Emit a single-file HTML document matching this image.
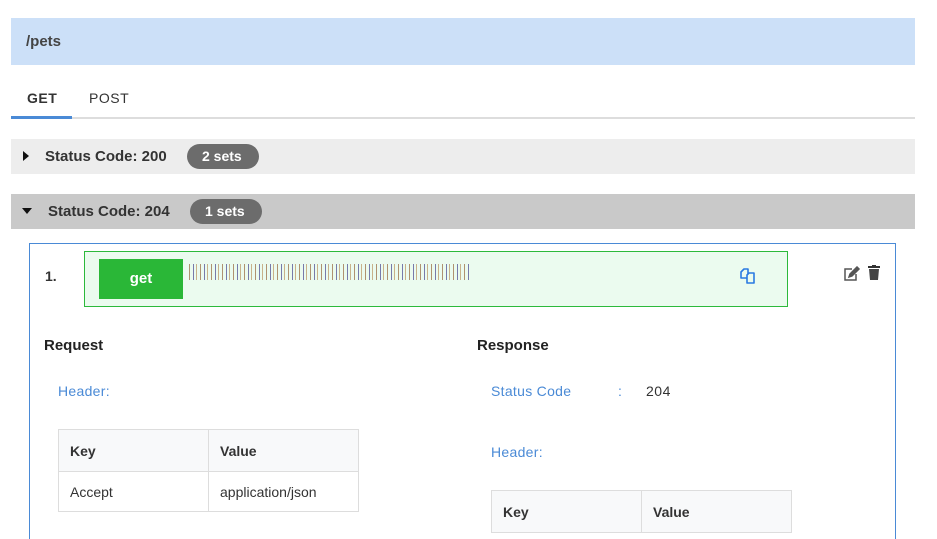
<!DOCTYPE html>
<html><head><style>
html,body{margin:0;width:937px;height:539px;overflow:hidden;background:#fff;font-family:"Liberation Sans",sans-serif}
#w{position:relative;width:937px;height:539px;overflow:hidden}
.a{position:absolute}
.hdr{left:11px;top:18px;width:904px;height:47px;background:#cce0f8;color:#444;font-size:15px;font-weight:bold;line-height:47px;padding-left:15px;box-sizing:border-box}
.tab{top:90px;font-size:14px;color:#333;letter-spacing:.5px}
.bar{left:11px;width:904px;height:35px;font-weight:bold;font-size:15px;color:#333}
.pill{position:absolute;background:#6c6c6c;color:#fff;border-radius:13px;height:25px;line-height:25px;font-size:14px;font-weight:bold;padding:0 15px;top:5px}
.lbl{color:#4a8ad6;font-size:14px;letter-spacing:.3px}
table{border-collapse:collapse;font-size:14px;color:#333}
td{border:1px solid #ddd;height:42px;padding:0 11px;box-sizing:border-box}
</style></head><body><div id="w">
<div class="a hdr">/pets</div>
<div class="a tab" style="left:27px;font-weight:bold">GET</div>
<div class="a tab" style="left:89px">POST</div>
<div class="a" style="left:11px;top:117px;width:904px;height:2px;background:#ddd"></div>
<div class="a" style="left:11px;top:116px;width:61px;height:3px;background:#4a8ad6"></div>
<div class="a bar" style="top:139px;background:#ededed">
 <div class="a" style="left:12px;top:12px;width:0;height:0;border-left:6px solid #111;border-top:5px solid transparent;border-bottom:5px solid transparent"></div>
 <div class="a" style="left:34px;top:9px">Status Code: 200</div>
 <div class="pill" style="left:176px;width:42px">2 sets</div>
</div>
<div class="a bar" style="top:194px;background:#c9c9c9">
 <div class="a" style="left:11px;top:14px;width:0;height:0;border-top:6px solid #111;border-left:5px solid transparent;border-right:5px solid transparent"></div>
 <div class="a" style="left:37px;top:9px">Status Code: 204</div>
 <div class="pill" style="left:179px;width:42px">1 sets</div>
</div>
<div class="a" style="left:29px;top:243px;width:867px;height:296px;border:1px solid #4a8ad6;border-bottom:0;box-sizing:border-box"></div>
<div class="a" style="left:45px;top:268px;font-weight:bold;font-size:14px;color:#333">1.</div>
<div class="a" style="left:84px;top:251px;width:704px;height:56px;background:#ebfbef;border:1px solid #2cb93b;box-sizing:border-box"></div>
<div class="a" style="left:99px;top:259px;width:84px;height:40px;background:#2ab737;color:#fff;font-weight:bold;font-size:15px;text-align:center;line-height:40px">get</div>
<div class="a" style="left:189px;top:264px;width:282px;height:16px;background:repeating-linear-gradient(90deg,#a07850 0 1px,transparent 1px 4px,#5a5a9a 4px 5px,transparent 5px 7px,#c0a070 7px 8px,transparent 8px 11px);opacity:.8"></div>
<svg class="a" style="left:739px;top:266px" width="19" height="19" viewBox="0 0 19 19" fill="#ebfbef" stroke="#2a7ae2" stroke-width="1.6" stroke-linejoin="round"><path d="M2 6l3-3h4v9H2z"/><path d="M8 9l2-2h5v10H8z"/></svg>
<svg class="a" style="left:843px;top:266px" width="18" height="16" viewBox="0 0 18 16" fill="none" stroke="#555" stroke-width="1.5"><path d="M9 3H2v11h11V8"/><path d="M6 11l1-3 7-7 2 2-7 7z" fill="#555"/></svg>
<svg class="a" style="left:868px;top:265px" width="12" height="15" viewBox="0 0 12 15"><rect x="0" y="1" width="12" height="2" fill="#333"/><rect x="4" y="0" width="4" height="2" fill="#333"/><path d="M1 4h10l-1 11H2z" fill="#444"/></svg>
<div class="a" style="left:44px;top:337px;font-weight:bold;font-size:15px;color:#222">Request</div>
<div class="a" style="left:477px;top:337px;font-weight:bold;font-size:15px;color:#222">Response</div>
<div class="a lbl" style="left:58px;top:383px">Header:</div>
<div class="a lbl" style="left:491px;top:383px">Status Code</div>
<div class="a lbl" style="left:618px;top:383px">:</div>
<div class="a" style="left:646px;top:383px;font-size:14px;color:#333;letter-spacing:.5px">204</div>
<div class="a lbl" style="left:491px;top:444px">Header:</div>
<table class="a" style="left:58px;top:429px;width:301px">
<tr style="background:#f8f9fa;font-weight:bold"><td style="width:150px">Key</td><td>Value</td></tr>
<tr><td style="height:40px">Accept</td><td style="height:40px">application/json</td></tr></table>
<div class="a" style="left:491px;top:490px;width:301px;height:49px;overflow:hidden">
<table style="width:301px">
<tr style="background:#f8f9fa;font-weight:bold"><td style="width:150px">Key</td><td>Value</td></tr>
</table></div>
</div></body></html>
